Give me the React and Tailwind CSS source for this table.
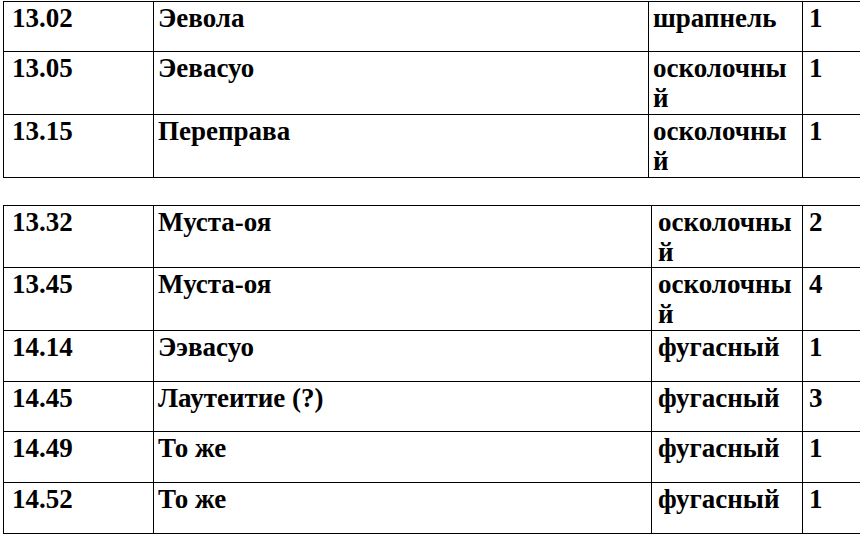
import React from "react";

const t1 = [
  { h: "h-[50px]", c: ["13.02", "Эевола", ["шрапнель"], "1"] },
  { h: "h-[63px]", c: ["13.05", "Эевасуо", ["осколочны", "й"], "1"] },
  { h: "h-[63px]", c: ["13.15", "Переправа", ["осколочны", "й"], "1"] },
];

const t2 = [
  { h: "h-[62px]", c: ["13.32", "Муста-оя", ["осколочны", "й"], "2"] },
  { h: "h-[63px]", c: ["13.45", "Муста-оя", ["осколочны", "й"], "4"] },
  { h: "h-[51px]", c: ["14.14", "Ээвасуо", ["фугасный"], "1"] },
  { h: "h-[50px]", c: ["14.45", "Лаутеитие (?)", ["фугасный"], "3"] },
  { h: "h-[51px]", c: ["14.49", "То же", ["фугасный"], "1"] },
  { h: "h-[51px]", c: ["14.52", "То же", ["фугасный"], "1"] },
];

const txt = "font-['Liberation_Serif'] font-bold text-[27px] leading-[30px] text-black";

function Table({ rows, w2, w3, p3 }) {
  return (
    <div className="w-[900px] border-t border-l border-black">
      {rows.map((r, i) => (
        <div key={i} className={`flex ${r.h} border-b border-black`}>
          <div className={`w-[150px] shrink-0 border-r border-black pl-[8px] pt-[1px] ${txt}`}>{r.c[0]}</div>
          <div className={`${w2} shrink-0 border-r border-black pl-[4px] pt-[1px] ${txt}`}>{r.c[1]}</div>
          <div className={`${w3} shrink-0 border-r border-black ${p3} pt-[1px] ${txt}`}>
            {r.c[2].map((s, j) => (
              <div key={j}>{s}</div>
            ))}
          </div>
          <div className={`flex-1 pl-[6px] pt-[1px] ${txt}`}>{r.c[3]}</div>
        </div>
      ))}
    </div>
  );
}

export default function App() {
  return (
    <div className="w-[860px] h-[534px] overflow-hidden bg-white pt-[1px] pl-[3px]">
      <Table rows={t1} w2="w-[495px]" w3="w-[154px]" p3="pl-[4px]" />
      <div className="mt-[27px]">
        <Table rows={t2} w2="w-[498px]" w3="w-[151px]" p3="pl-[6px]" />
      </div>
    </div>
  );
}
